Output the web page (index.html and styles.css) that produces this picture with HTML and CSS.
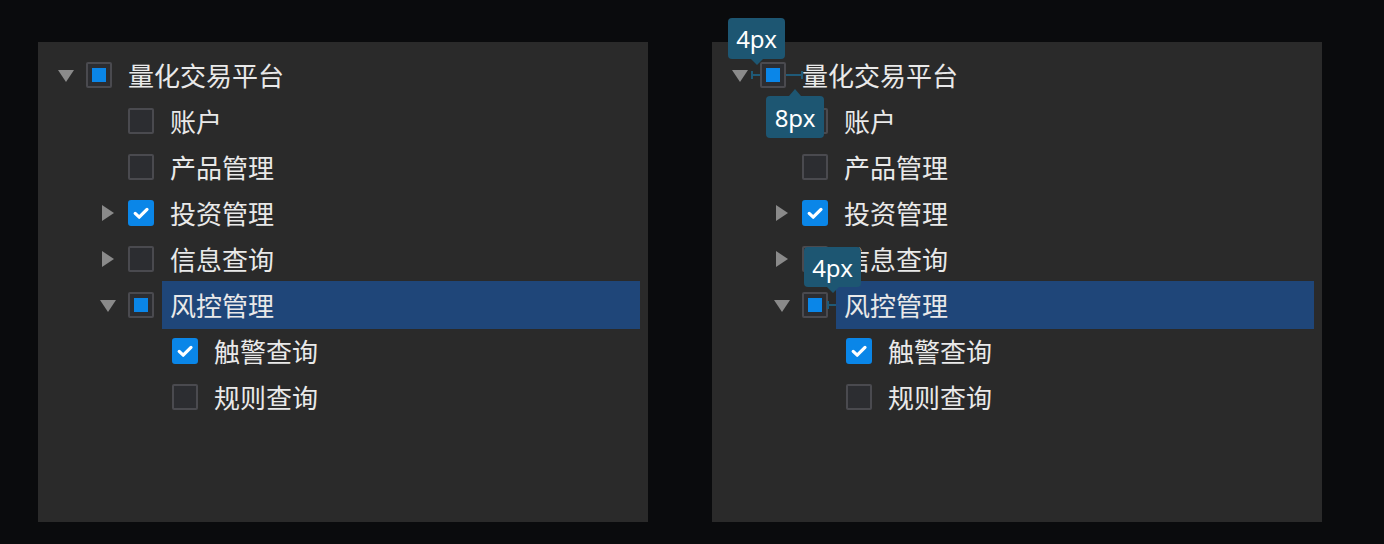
FILE: index.html
```html
<!DOCTYPE html>
<html lang="zh">
<head>
<meta charset="utf-8">
<link rel="stylesheet" href="styles.css">
</head>
<body>
<div class="stage">
  <div class="panel">
    <div class="row lv0"><span class="arrow down"></span><span class="cb half"></span><span class="label">量化交易平台</span></div>
    <div class="row lv1"><span class="arrow none"></span><span class="cb"></span><span class="label">账户</span></div>
    <div class="row lv1"><span class="arrow none"></span><span class="cb"></span><span class="label">产品管理</span></div>
    <div class="row lv1"><span class="arrow right"></span><span class="cb on"><svg viewBox="0 0 26 26"><path d="M7.2 13.4 L11.2 17.2 L19 9.4" /></svg></span><span class="label">投资管理</span></div>
    <div class="row lv1"><span class="arrow right"></span><span class="cb"></span><span class="label">信息查询</span></div>
    <div class="row lv1"><span class="arrow down"></span><span class="cb half"></span><span class="label sel">风控管理</span></div>
    <div class="row lv2"><span class="cb on"><svg viewBox="0 0 26 26"><path d="M7.2 13.4 L11.2 17.2 L19 9.4" /></svg></span><span class="label">触警查询</span></div>
    <div class="row lv2"><span class="cb"></span><span class="label">规则查询</span></div>
  </div>
  <div class="panel annotated">
    <div class="row lv0"><span class="arrow down"></span><span class="cb half"></span><span class="label">量化交易平台</span></div>
    <div class="row lv1"><span class="arrow none"></span><span class="cb"></span><span class="label">账户</span></div>
    <div class="row lv1"><span class="arrow none"></span><span class="cb"></span><span class="label">产品管理</span></div>
    <div class="row lv1"><span class="arrow right"></span><span class="cb on"><svg viewBox="0 0 26 26"><path d="M7.2 13.4 L11.2 17.2 L19 9.4" /></svg></span><span class="label">投资管理</span></div>
    <div class="row lv1"><span class="arrow right"></span><span class="cb"></span><span class="label">信息查询</span></div>
    <div class="row lv1"><span class="arrow down"></span><span class="cb half"></span><span class="label sel">风控管理</span></div>
    <div class="row lv2"><span class="cb on"><svg viewBox="0 0 26 26"><path d="M7.2 13.4 L11.2 17.2 L19 9.4" /></svg></span><span class="label">触警查询</span></div>
    <div class="row lv2"><span class="cb"></span><span class="label">规则查询</span></div>

    <svg class="dim dim-a" viewBox="0 0 9 10"><path d="M1 1 V9 M1 5 H9" /></svg>
    <svg class="dim dim-b" viewBox="0 0 17 10"><path d="M0 5 H16 M16 1 V9" /></svg>
    <svg class="dim dim-c" viewBox="0 0 9 10"><path d="M1 1 V9 M1 5 H9" /></svg>

    <div class="tip tip-a down">4px</div>
    <div class="tip tip-b up">8px</div>
    <div class="tip tip-c down">4px</div>
  </div>
</div>
</body>
</html>
```

FILE: styles.css
```css
html, body {
  margin: 0;
  padding: 0;
  background: #0a0b0d;
}
body {
  width: 1384px;
  height: 544px;
  overflow: hidden;
  font-family: "Noto Sans CJK SC", "Noto Sans", sans-serif;
}
.stage {
  display: flex;
  gap: 64px;
  padding: 42px 0 0 38px;
}
.panel {
  position: relative;
  width: 610px;
  height: 480px;
  box-sizing: border-box;
  padding-top: 10px;
  background: #2a2a2a;
}
.row {
  display: flex;
  align-items: center;
  height: 46px;
}
.lv0 { padding-left: 20px; }
.lv1 { padding-left: 62px; }
.lv2 { padding-left: 134px; }
.arrow {
  width: 16px;
  height: 16px;
  margin-right: 12px;
  flex: none;
  display: flex;
  align-items: center;
  justify-content: center;
  box-sizing: border-box;
}
.arrow.down::before {
  content: "";
  border-left: 8px solid transparent;
  border-right: 8px solid transparent;
  border-top: 12px solid #8a8a8a;
  margin-top: 2px;
}
.arrow.right::before {
  content: "";
  border-top: 8px solid transparent;
  border-bottom: 8px solid transparent;
  border-left: 12px solid #8a8a8a;
}
.cb {
  width: 26px;
  height: 26px;
  flex: none;
  box-sizing: border-box;
  border: 2px solid #4a4a4f;
  background: #2c2d31;
  border-radius: 2px;
  display: flex;
  align-items: center;
  justify-content: center;
}
.cb.half::before {
  content: "";
  width: 14px;
  height: 14px;
  background: #0a86e8;
}
.cb.on {
  background: #0a86e8;
  border-color: #0a86e8;
  border-radius: 3px;
}
.cb svg {
  width: 26px;
  height: 26px;
  flex: none;
}
.cb svg path {
  fill: none;
  stroke: #ffffff;
  stroke-width: 3.2;
  stroke-linecap: round;
  stroke-linejoin: round;
}
.label {
  margin-left: 8px;
  padding: 0 8px;
  height: 48px;
  margin-top: -1px;
  margin-bottom: -1px;
  display: flex;
  align-items: center;
  font-size: 26px;
  color: #e9e9e9;
  line-height: 1;
  white-space: nowrap;
}
.label.sel {
  flex: 1;
  margin-right: 8px;
  background: #1f4679;
}
.dim {
  position: absolute;
  height: 10px;
  overflow: visible;
}
.dim path {
  fill: none;
  stroke: #1f5a78;
  stroke-width: 2;
}
.dim-a { left: 39px; top: 28px; width: 9px; }
.dim-b { left: 74px; top: 28px; width: 17px; }
.dim-c { left: 115px; top: 258px; width: 9px; }
.tip {
  position: absolute;
  box-sizing: border-box;
  height: 41px;
  padding: 0 8px;
  border-radius: 4px;
  background: #1d5672;
  color: #ffffff;
  font-family: "Noto Sans", "Open Sans", sans-serif;
  font-size: 24px;
  line-height: 41px;
  display: flex;
  align-items: center;
  justify-content: center;
  z-index: 2;
}
.tip::after {
  content: "";
  position: absolute;
  left: 50%;
  margin-left: -6px;
  border-left: 6px solid transparent;
  border-right: 6px solid transparent;
}
.tip.down::after {
  top: 100%;
  border-top: 6px solid #1d5672;
}
.tip.up::after {
  bottom: 100%;
  border-bottom: 7px solid #1d5672;
}
.tip-a { left: 16px; top: -24px; width: 57px; }
.tip-b { left: 54px; top: 54px; width: 58px; height: 42px; }
.tip-c { left: 92px; top: 205px; width: 57px; height: 40px; }
```
